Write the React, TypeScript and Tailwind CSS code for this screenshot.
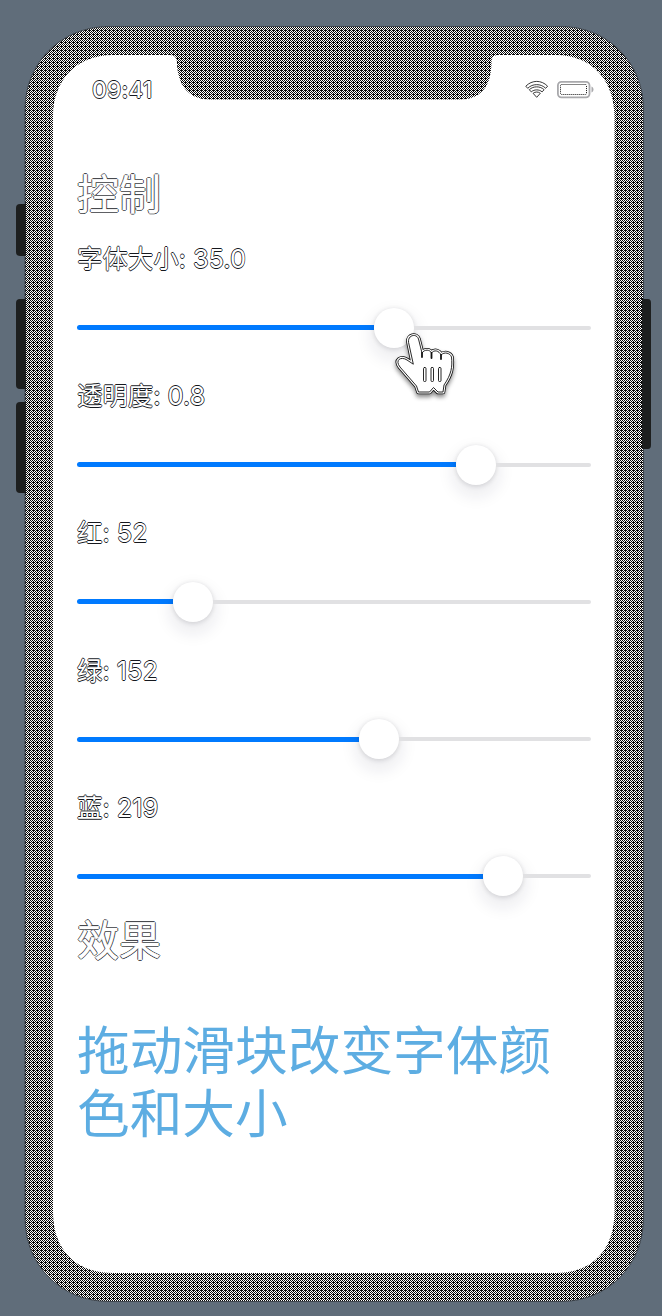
import React from "react";

const outline =
  "text-white font-['Inter','Noto_Sans_CJK_SC',sans-serif] [font-feature-settings:'calt'_0] [text-shadow:0.7px_0_#15181e,-0.7px_0_#15181e,0_0.7px_#15181e,0_-0.7px_#15181e]";

const headingOutline =
  "text-white [-webkit-text-stroke:0.5px_#fff] font-['Noto_Sans_CJK_SC',sans-serif] [text-shadow:1px_0_#15181e,-1px_0_#15181e,0_1px_#15181e,0_-1px_#15181e]";

type Row = { label: string; value: string; fill: number };

const rows: Row[] = [
  { label: "字体大小", value: "35.0", fill: 317 },
  { label: "透明度", value: "0.8", fill: 399 },
  { label: "红", value: "52", fill: 116 },
  { label: "绿", value: "152", fill: 302 },
  { label: "蓝", value: "219", fill: 426 },
];

function Slider({ fill }: { fill: number }) {
  return (
    <div className="flex h-10 w-[514px] items-center">
      <div className="h-[5px] rounded-l-full bg-[#007aff]" style={{ width: fill - 20 }} />
      <div className="h-10 w-10 shrink-0 rounded-full bg-white shadow-[0_8px_16px_4px_rgba(30,30,60,0.08),0_1px_5px_rgba(0,0,0,0.14)]" />
      <div className="h-[4px] flex-1 rounded-r-full bg-[#e1e1e3]" />
    </div>
  );
}

function StatusIcons() {
  return (
    <svg className="absolute left-[524px] top-[80px]" width="72" height="20" viewBox="524 80 72 20" fill="none">
      <g stroke="#222" strokeWidth="0.9" fill="#fff">
        <path d="M525.8 86.2C532 79.8 541.5 79.8 547.6 86.2L545.7 88.3C540.8 83.4 532.6 83.4 527.7 88.3Z" />
        <path d="M529.3 89.7C533.2 85.9 540.2 85.9 544.1 89.7L542.1 91.9C539.2 89.2 534.2 89.2 531.3 91.9Z" />
        <path d="M533.1 93.3C535.2 91.6 538.2 91.6 540.3 93.3L536.7 97.3Z" />
      </g>
      <rect x="557.9" y="81.9" width="31.6" height="15.4" rx="3.5" stroke="#a9a9ac" strokeWidth="1.8" />
      <rect x="560.5" y="84.5" width="26" height="10" rx="1" stroke="#111" strokeDasharray="1 1" />
      <path d="M591.5 86.5C594.2 87.8 594.2 91.2 591.5 92.5Z" fill="#a9a9ac" />
    </svg>
  );
}

function HandPointer() {
  const hand =
    "M408.5 342C407.5 335 416.5 333 418.5 339L422 353C424.5 349 430 349.5 431.5 353C434 349.5 439 350.5 441 355C444.5 351.5 450 353 451.5 357C452.5 367 451.5 374 444 385L443 392H438L433.5 387.5L429.5 392H418.5L416.5 386L400 367C394.5 360 401 356 407 360L413 364Z";
  return (
    <svg
      className="absolute left-[390px] top-[326px] [filter:drop-shadow(0_3px_2px_rgba(0,0,0,0.45))]"
      width="72"
      height="80"
      viewBox="390 326 72 80"
      strokeLinejoin="round"
      strokeLinecap="round"
    >
      <path d={hand} fill="#fff" stroke="#111" strokeWidth="4.6" />
      <path d={hand} fill="#fff" stroke="#fff" strokeWidth="3" />
      <path d={hand} fill="#fff" stroke="#111" strokeWidth="0.9" />
      <path d="M422 353V357M431.5 353V358M441 355V359" fill="none" stroke="#111" strokeWidth="1.8" />
      <g fill="#fff" stroke="#111" strokeWidth="0.9">
        <rect x="423.5" y="367.5" width="2.5" height="14" rx="1" />
        <rect x="431" y="367.5" width="2.5" height="14" rx="1" />
        <rect x="438.5" y="367.5" width="2.5" height="14" rx="1" />
      </g>
    </svg>
  );
}

function PhoneBody() {
  return (
    <svg className="absolute left-0 top-0" width="662" height="1316" viewBox="0 0 662 1316">
      <defs>
        <pattern id="mesh" width="4" height="4" patternUnits="userSpaceOnUse">
          <rect width="4" height="4" fill="#fff" />
          <path
            d="M0 0h1v1h-1zM2 0h1v1h-1zM1 1h1v1h-1zM3 1h1v1h-1zM0 2h1v1h-1zM2 2h1v1h-1zM1 3h1v1h-1zM3 3h1v1h-1zM1 2h1v1h-1z"
            fill="#080808"
            shapeRendering="crispEdges"
          />
        </pattern>
      </defs>
      <path
        d="M109 26.5H561C608 26.5 643.5 63 643.5 109V1218C643.5 1265 608 1301.5 561 1301.5H109C61 1301.5 25 1265 25 1218V109C25 63 61 26.5 109 26.5Z"
        fill="url(#mesh)"
        stroke="#3d444c"
      />
      <g fill="#1d1f1f">
        <path d="M20 204H26V256H20Q16 256 16 252V208Q16 204 20 204Z" />
        <path d="M20 299H26V389H20Q16 389 16 385V303Q16 299 20 299Z" />
        <path d="M20 402H26V493H20Q16 493 16 489V406Q16 402 20 402Z" />
        <path d="M642 299H648Q651 299 651 303V445Q651 449 648 449H642Z" />
      </g>
      <path
        d="M113 55H170C175 55 177 58 177 63C178 86 189 99.5 210 99.5H460C481 99.5 491 86 491.5 63C491.5 58 493 55 498 55H556C593 55 614.5 82 614.5 116V1212C614.5 1249 593 1273 556 1273H113C75 1273 53 1249 53 1212V116C53 82 75 55 113 55Z"
        fill="#fff"
      />
    </svg>
  );
}

export default function App() {
  return (
    <div className="relative h-[1316px] w-[662px] overflow-hidden bg-[#606d7a]">
      <PhoneBody />
      <StatusIcons />
      <main className="relative flex flex-col pl-[77px] pt-[76px]">
        <div className={`${outline} ml-[15px] h-[28px] text-[23px] leading-[28px] font-medium`}>09:41</div>
        <h1 className={`${headingOutline} mt-[58px] h-[63px] text-[42px] leading-[60px]`}>控制</h1>
        {rows.map((row) => (
          <section key={row.label} className="h-[137.2px] pt-[14px]">
            <div className={`${outline} h-10 text-[25.5px] leading-10 tracking-[-0.1px]`}>
              {row.label}: {row.value}
            </div>
            <div className="pt-[28.5px]">
              <Slider fill={row.fill} />
            </div>
          </section>
        ))}
        <h1 className={`${headingOutline} -mt-[3px] h-[62px] text-[42px] leading-[60px]`}>效果</h1>
        <p className="mt-[46px] w-[490px] font-['Noto_Sans_CJK_SC',sans-serif] text-[52.7px] leading-[63px] text-[#5dade2]">
          拖动滑块改变字体颜色和大小
        </p>
      </main>
      <HandPointer />
    </div>
  );
}
